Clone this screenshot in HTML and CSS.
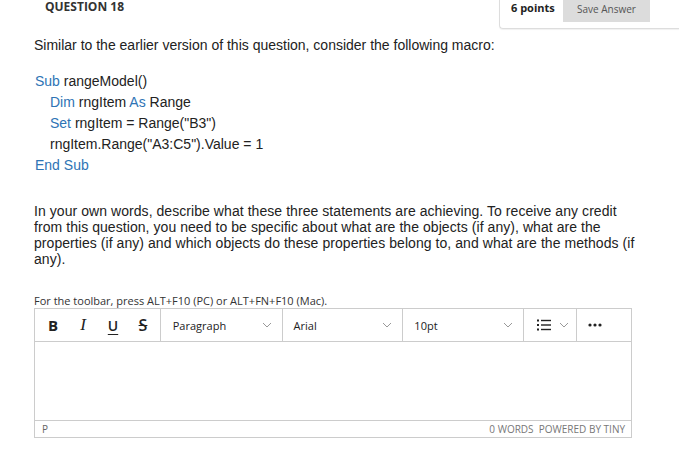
FILE: index.html
```html
<!DOCTYPE html>
<html>
<head>
<meta charset="utf-8">
<link rel="stylesheet" href="styles.css">
</head>
<body>
<div class="header">
  <div class="qtitle">QUESTION 18</div>
  <div class="points-box">
    <span class="points">6 points</span>
    <span class="save">Save Answer</span>
  </div>
</div>
<div class="content">
  <p class="intro">Similar to the earlier version of this question, consider the following macro:</p>
  <div class="code">
    <div class="cl"><span class="kw">Sub</span> rangeModel()</div>
    <div class="cl ind"><span class="kw">Dim</span> rngItem <span class="kw">As</span> Range</div>
    <div class="cl ind"><span class="kw">Set</span> rngItem = Range("B3")</div>
    <div class="cl ind">rngItem.Range("A3:C5").Value = 1</div>
    <div class="cl"><span class="kw">End Sub</span></div>
  </div>
  <p class="para">In your own words, describe what these three statements are achieving. To receive any credit from this question, you need to be specific about what are the objects (if any), what are the properties (if any) and which objects do these properties belong to, and what are the methods (if any).</p>
  <div class="hint">For the toolbar, press ALT+F10 (PC) or ALT+FN+F10 (Mac).</div>
  <div class="editor">
    <div class="toolbar">
      <div class="grp fmt">
        <span class="tb b">B</span>
        <span class="tb i">I</span>
        <span class="tb u">U</span>
        <span class="tb s">S</span>
      </div>
      <div class="grp sel w-para"><span>Paragraph</span><svg class="chev" width="10" height="6" viewBox="0 0 10 6"><path d="M1 1l4 4 4-4" fill="none" stroke="#999" stroke-width="1"/></svg></div>
      <div class="grp sel w-font"><span>Arial</span><svg class="chev" width="10" height="6" viewBox="0 0 10 6"><path d="M1 1l4 4 4-4" fill="none" stroke="#999" stroke-width="1"/></svg></div>
      <div class="grp sel w-size"><span>10pt</span><svg class="chev" width="10" height="6" viewBox="0 0 10 6"><path d="M1 1l4 4 4-4" fill="none" stroke="#999" stroke-width="1"/></svg></div>
      <div class="grp list">
        <svg width="14" height="12" viewBox="0 0 14 12"><rect x="0" y="0.5" width="2" height="2" fill="#222"/><rect x="0" y="5" width="2" height="2" fill="#222"/><rect x="0" y="9.5" width="2" height="2" fill="#222"/><rect x="4" y="0.8" width="10" height="1.4" fill="#222"/><rect x="4" y="5.3" width="10" height="1.4" fill="#222"/><rect x="4" y="9.8" width="10" height="1.4" fill="#222"/></svg>
        <svg class="chev" width="10" height="6" viewBox="0 0 10 6"><path d="M1 1l4 4 4-4" fill="none" stroke="#999" stroke-width="1"/></svg>
      </div>
      <div class="grp more">
        <svg width="14" height="4" viewBox="0 0 14 4"><circle cx="2" cy="2" r="1.6" fill="#222"/><circle cx="7" cy="2" r="1.6" fill="#222"/><circle cx="12" cy="2" r="1.6" fill="#222"/></svg>
      </div>
    </div>
    <div class="area"></div>
    <div class="status">
      <span class="path">P</span>
      <span class="right">0 WORDS&nbsp; POWERED BY TINY</span>
    </div>
  </div>
</div>
</body>
</html>
```
FILE: styles.css
```css
html, body { margin: 0; padding: 0; background: #fff; }
body { width: 679px; height: 466px; overflow: hidden; color: #222; }

.header { display: flex; align-items: flex-start; height: 29px; }
.qtitle {
  font-family: "Open Sans", sans-serif; font-weight: 700; font-size: 12px;
  line-height: 14px; color: #333; padding-left: 45px;
}
.points-box {
  margin-left: auto; width: 168px; height: 28px; display: flex; align-items: flex-start;
  border: 1px solid #ddd; border-top: none; border-right: none;
  border-bottom-left-radius: 4px; box-shadow: 0 1px 1px rgba(0,0,0,0.06);
  padding-left: 11px;
}
.points {
  font-family: "Open Sans", sans-serif; font-weight: 700; font-size: 11px;
  color: #222; line-height: 16px; width: 52px;
}
.save {
  font-family: "Open Sans", sans-serif; font-size: 10px; color: #555;
  background: #dcdcdc; width: 87px; height: 22px; line-height: 18px;
  text-align: center;
}

.content { padding-left: 34px; width: 620px; }
.intro {
  font-family: "Liberation Sans", Arial, sans-serif; font-size: 14px; line-height: 16px;
  margin: 8px 0 0 0; color: #222;
}
.code { margin-top: 18px; font-family: "Liberation Sans", Arial, sans-serif; font-size: 14px; color: #222; }
.cl { line-height: 21px; height: 21px; padding-left: 1px; }
.cl.ind { padding-left: 16px; }
.kw { color: #2e74b5; }

.para {
  font-family: "Liberation Sans", Arial, sans-serif; font-size: 14px; line-height: 16px;
  margin: 27px 0 0 0; color: #222; width: 606px; letter-spacing: 0.06px;
}
.hint {
  font-family: "Open Sans", sans-serif; font-size: 11px; line-height: 13px;
  color: #333; margin-top: 27px; height: 14px;
}

.editor { border: 1px solid #ccc; width: 596px; }
.toolbar { display: flex; height: 32px; border-bottom: 1px solid #ccc; }
.grp { display: flex; align-items: center; border-right: 1px solid #ccc; height: 32px; box-sizing: border-box; }
.grp:last-child { border-right: none; }
.fmt { width: 126px; padding-left: 3px; }
.tb { display: inline-block; width: 30px; text-align: center; color: #222; }
.tb.b { font-family: "Open Sans", sans-serif; font-weight: 700; font-size: 15px; }
.tb.i { font-family: "Liberation Serif", serif; font-style: italic; font-size: 17px; }
.tb.u { font-family: "Open Sans", sans-serif; font-size: 14px; font-weight: 600; text-decoration: underline; text-underline-offset: 3px; }
.tb.s { font-family: "Open Sans", sans-serif; font-size: 16px; font-weight: 600; text-decoration: line-through; }
.sel {
  justify-content: space-between; padding: 0 10px 0 12px;
  font-family: "Open Sans", sans-serif; font-size: 11px; color: #222;
}
.w-para { width: 122px; }
.w-font { width: 121px; padding-left: 11px; }
.w-size { width: 121px; padding-left: 11px; }
.chev { display: block; }
.list { width: 53px; padding-left: 13px; gap: 8px; }
.more { width: 54px; padding-left: 11px; }

.area { height: 78px; }
.status {
  height: 16px; border-top: 1px solid #ccc; display: flex; justify-content: space-between;
  align-items: center; padding: 0 6px 0 7px;
  font-family: "Open Sans", sans-serif; font-size: 10px; color: #777;
}
.path { color: #666; }
```
